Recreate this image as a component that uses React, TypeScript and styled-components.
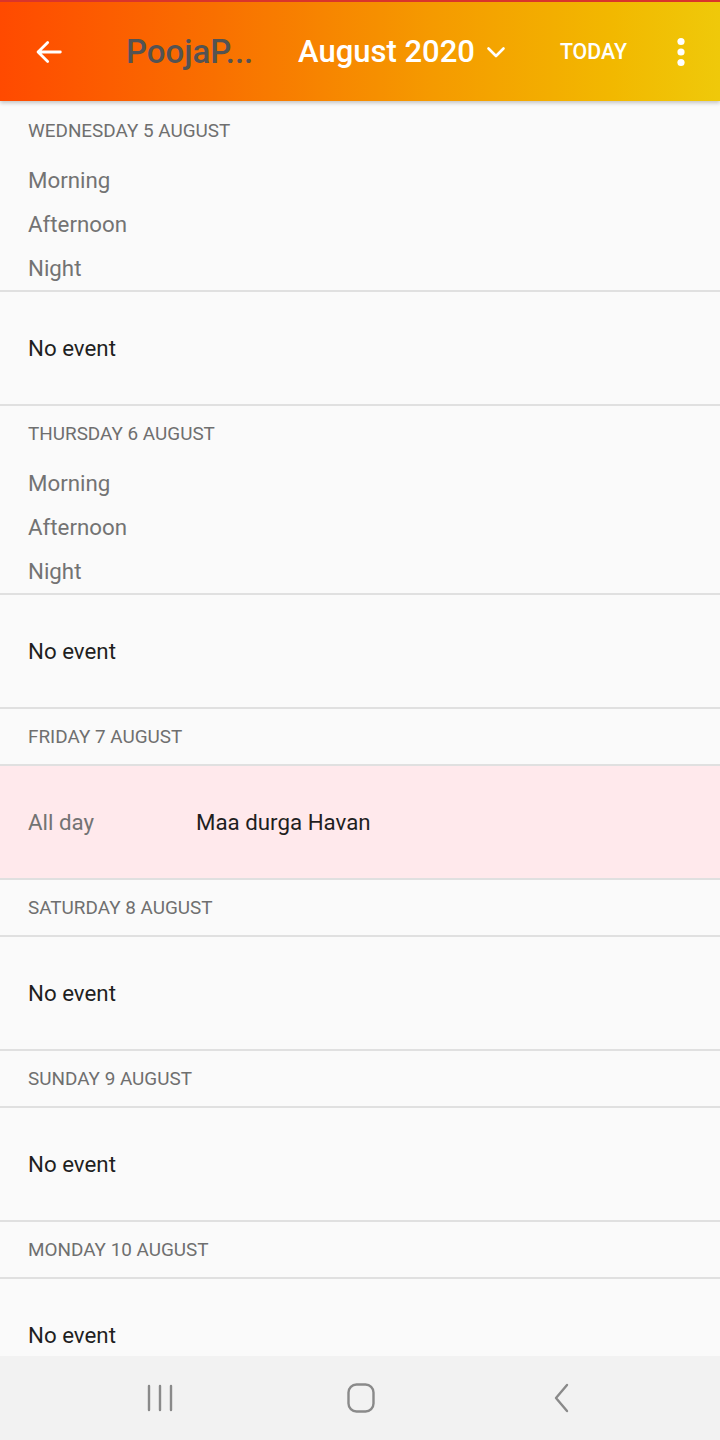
import React from "react";
import styled, { createGlobalStyle } from "styled-components";

const Global = createGlobalStyle`
  html, body { margin: 0; padding: 0; background: #fafafa; }
  body { font-family: Roboto, "Noto Sans", Arial, sans-serif; -webkit-font-smoothing: antialiased; }
  * { box-sizing: border-box; }
`;

const Screen = styled.div`
  width: 720px;
  height: 1440px;
  display: flex;
  flex-direction: column;
  background: #fafafa;
  overflow: hidden;
  position: relative;
`;

const AppBar = styled.header`
  flex: 0 0 101px;
  display: flex;
  align-items: center;
  border-top: 2px solid #d9352b;
  background: linear-gradient(90deg, #ff4a00 0%, #f97000 30%, #f59a00 60%, #f2b800 85%, #efc90a 100%);
  box-shadow: 0 2px 4px rgba(0, 0, 0, 0.22);
  position: relative;
  z-index: 2;
`;

const BackButton = styled.div`
  width: 98px;
  display: flex;
  align-items: center;
  justify-content: center;
  flex: 0 0 auto;
`;

const MenuButton = styled.div`
  margin-left: auto;
  width: 78px;
  display: flex;
  align-items: center;
  justify-content: center;
`;

const Title = styled.div`
  font-size: 33px;
  font-weight: 500;
  color: #535353;
  margin-left: 28px;
  width: 172px;
  white-space: nowrap;
`;

const Month = styled.div`
  display: flex;
  align-items: center;
  gap: 9px;
  color: #fff;
  font-size: 31px;
  font-weight: 500;
`;

const Today = styled.div`
  color: #fff;
  font-size: 21.3px;
  font-weight: 500;
  margin-left: 52px;
`;

const List = styled.main`
  flex: 1;
  overflow: hidden;
  padding-top: 2px;
`;

const DayHeader = styled.div<{ $withSlots?: boolean }>`
  box-sizing: content-box;
  height: 55px;
  display: flex;
  align-items: center;
  padding-left: 28px;
  color: #6f6f6f;
  font-size: 18.9px;
  text-transform: uppercase;
  border-bottom: ${(p) => (p.$withSlots ? "none" : "2px solid #e0e0e0")};
`;

const Slots = styled.div`
  border-bottom: 2px solid #e0e0e0;
`;

const Slot = styled.div`
  height: 44px;
  display: flex;
  align-items: center;
  padding-left: 28px;
  font-size: 22.3px;
  color: #737373;
`;

const EventBlock = styled.div<{ $pink?: boolean }>`
  height: 114px;
  display: flex;
  align-items: center;
  padding-left: 28px;
  font-size: 22.3px;
  color: #1f1f1f;
  background: ${(p) => (p.$pink ? "#ffe9ec" : "transparent")};
  border-bottom: 2px solid #e0e0e0;
`;

const AllDay = styled.span`
  color: #737373;
  width: 168px;
`;

const NavBar = styled.nav`
  position: absolute;
  left: 0;
  right: 0;
  bottom: 0;
  height: 84px;
  background: #f2f2f2;
  display: flex;
  align-items: center;
  justify-content: space-between;
  padding: 0 138px 0 140px;
  z-index: 3;
`;

const NavIcon = styled.div`
  width: 40px;
  height: 40px;
  display: flex;
  align-items: center;
  justify-content: center;
`;

type Day = { label: string; slots?: boolean; event?: string };

const days: Day[] = [
  { label: "Wednesday 5 August", slots: true },
  { label: "Thursday 6 August", slots: true },
  { label: "Friday 7 August", event: "Maa durga Havan" },
  { label: "Saturday 8 August" },
  { label: "Sunday 9 August" },
  { label: "Monday 10 August" },
];

export default function App() {
  return (
    <>
      <Global />
      <Screen>
        <AppBar>
          <BackButton>
            <svg width="32" height="32" viewBox="0 0 24 24" fill="none" stroke="#fff" strokeWidth="2.1" strokeLinecap="round" strokeLinejoin="round">
              <path d="M20.5 12H3.8M11 4.8L3.8 12l7.2 7.2" />
            </svg>
          </BackButton>
          <Title>PoojaP...</Title>
          <Month>
            <span>August 2020</span>
            <svg width="24" height="24" viewBox="0 0 24 24" fill="none" stroke="#fff" strokeWidth="2.6" strokeLinecap="round" strokeLinejoin="round">
              <path d="M4.5 8.5l7.5 7.5 7.5-7.5" />
            </svg>
          </Month>
          <Today>TODAY</Today>
          <MenuButton>
            <svg width="10" height="30" viewBox="0 0 10 30" fill="#fff">
              <circle cx="5" cy="4.5" r="3.6" />
              <circle cx="5" cy="15" r="3.6" />
              <circle cx="5" cy="25.5" r="3.6" />
            </svg>
          </MenuButton>
        </AppBar>
        <List>
          {days.map((d) => (
            <section key={d.label}>
              <DayHeader $withSlots={d.slots}>{d.label}</DayHeader>
              {d.slots && (
                <Slots>
                  <Slot>Morning</Slot>
                  <Slot>Afternoon</Slot>
                  <Slot>Night</Slot>
                </Slots>
              )}
              {d.event ? (
                <EventBlock $pink>
                  <AllDay>All day</AllDay>
                  <span>{d.event}</span>
                </EventBlock>
              ) : (
                <EventBlock>No event</EventBlock>
              )}
            </section>
          ))}
        </List>
        <NavBar>
          <NavIcon>
            <svg width="30" height="30" viewBox="0 0 30 30" stroke="#8a8a8a" strokeWidth="2.4" strokeLinecap="round">
              <path d="M4 3v24M15 3v24M26 3v24" />
            </svg>
          </NavIcon>
          <NavIcon>
            <svg width="30" height="30" viewBox="0 0 30 30" fill="none" stroke="#8a8a8a" strokeWidth="2.4">
              <rect x="2.5" y="1.5" width="25" height="27" rx="8" />
            </svg>
          </NavIcon>
          <NavIcon>
            <svg width="20" height="30" viewBox="0 0 20 30" fill="none" stroke="#8a8a8a" strokeWidth="2.4" strokeLinecap="round" strokeLinejoin="round">
              <path d="M15 2L4 15l11 13" />
            </svg>
          </NavIcon>
        </NavBar>
      </Screen>
    </>
  );
}
